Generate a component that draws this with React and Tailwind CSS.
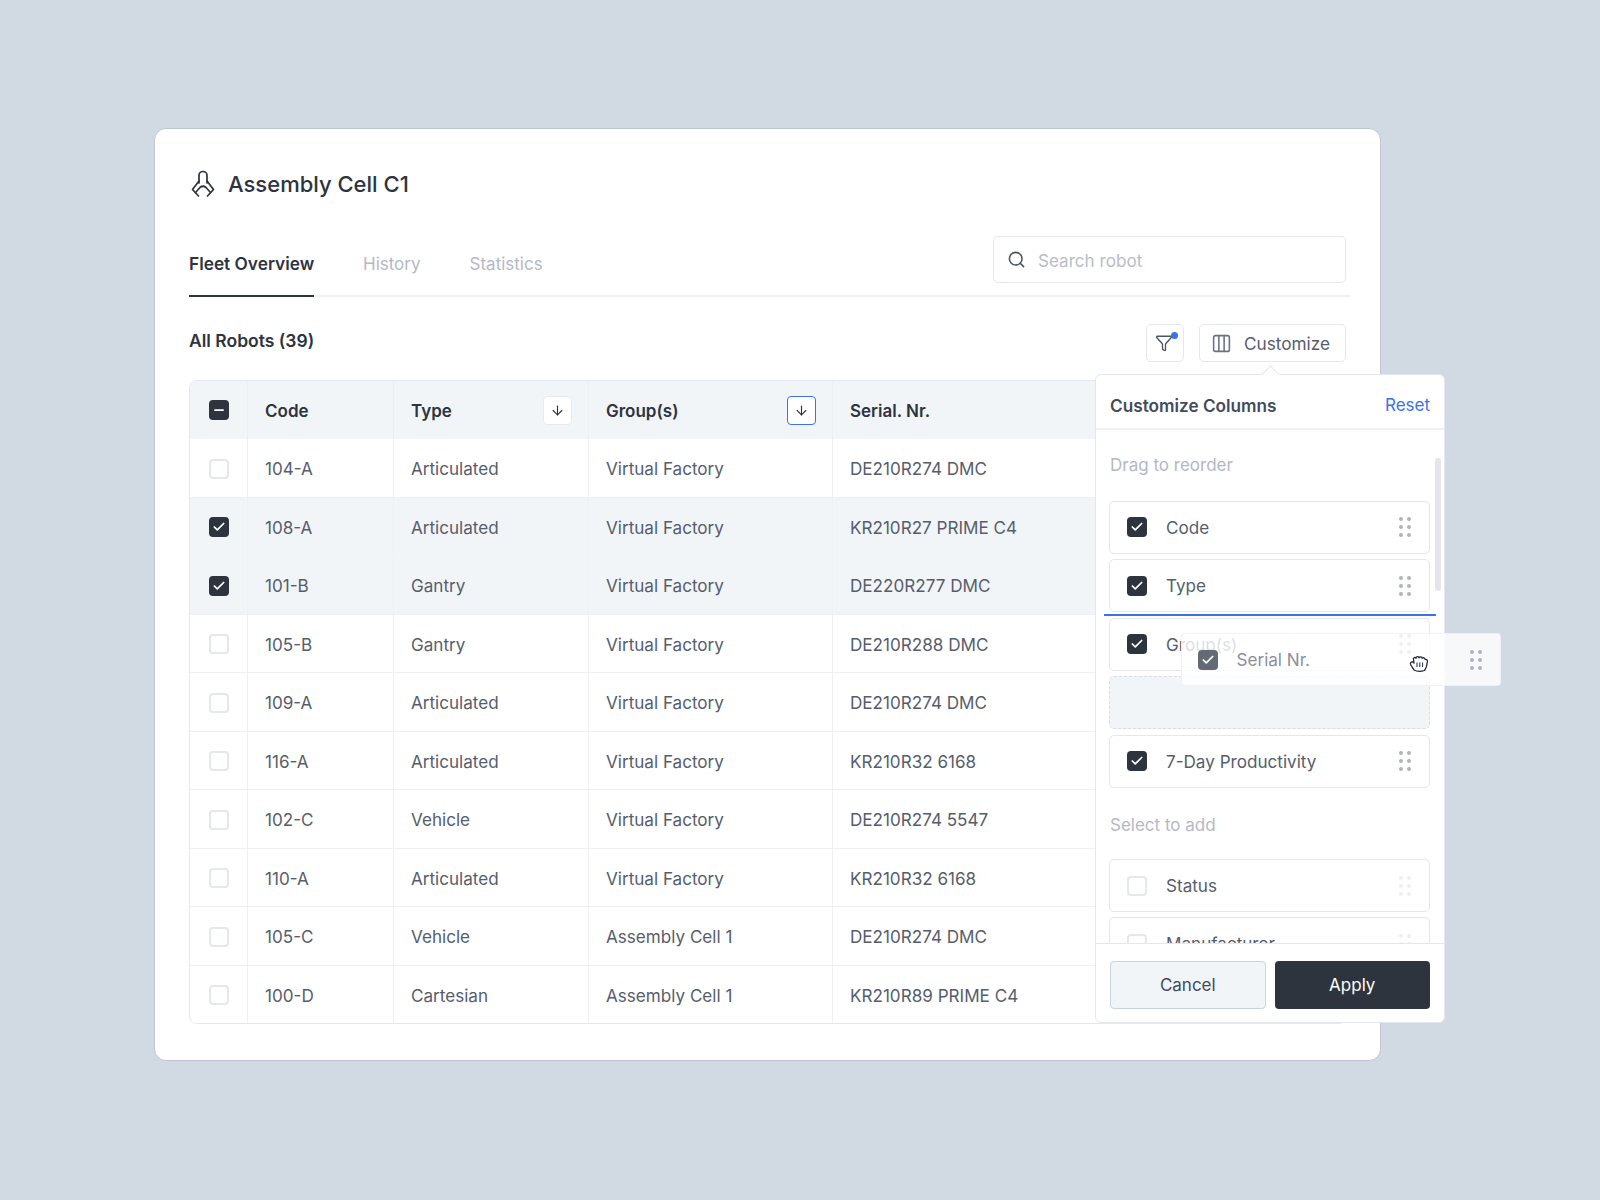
import React from "react";
import { ArrowDown, Check, Columns3, Funnel, Minus, Search } from "lucide-react";

const robots = [
  { code: "104-A", type: "Articulated", group: "Virtual Factory", serial: "DE210R274 DMC" },
  { code: "108-A", type: "Articulated", group: "Virtual Factory", serial: "KR210R27 PRIME C4", on: true },
  { code: "101-B", type: "Gantry", group: "Virtual Factory", serial: "DE220R277 DMC", on: true },
  { code: "105-B", type: "Gantry", group: "Virtual Factory", serial: "DE210R288 DMC" },
  { code: "109-A", type: "Articulated", group: "Virtual Factory", serial: "DE210R274 DMC" },
  { code: "116-A", type: "Articulated", group: "Virtual Factory", serial: "KR210R32 6168" },
  { code: "102-C", type: "Vehicle", group: "Virtual Factory", serial: "DE210R274 5547" },
  { code: "110-A", type: "Articulated", group: "Virtual Factory", serial: "KR210R32 6168" },
  { code: "105-C", type: "Vehicle", group: "Assembly Cell 1", serial: "DE210R274 DMC" },
  { code: "100-D", type: "Cartesian", group: "Assembly Cell 1", serial: "KR210R89 PRIME C4" },
];

const rowGrid = "grid grid-cols-[58px_146px_195px_244px_1fr]";

const Box = ({ on, mixed, faded }) => {
  if (on || mixed) {
    return (
      <span className={`flex h-5 w-5 shrink-0 items-center justify-center rounded-[4px] ${faded ? "bg-[#646a74]" : "bg-[#2d343e]"}`}>
        {mixed ? <Minus size={14} strokeWidth={3} color="#fff" /> : <Check size={14} strokeWidth={3} color="#fff" />}
      </span>
    );
  }
  return <span className="block h-5 w-5 shrink-0 rounded-[4px] border-2 border-[#e5e7ee] bg-white" />;
};

const Dots = ({ light }) => (
  <svg width="14" height="22" viewBox="0 0 14 22" className={light ? "fill-[#eceef2]" : "fill-[#aeb3c0]"}>
    {[3, 11, 19].map((y) => (
      <g key={y}>
        <circle cx="3" cy={y} r="2" />
        <circle cx="11" cy={y} r="2" />
      </g>
    ))}
  </svg>
);

const SortBtn = ({ active }) => (
  <span className={`flex h-[29px] w-[29px] items-center justify-center rounded-[4px] bg-white border ${active ? "border-[#3b71ee] border-[1.5px]" : "border-[#e8eaf0]"}`}>
    <ArrowDown size={15} strokeWidth={1.8} color="#2d343e" />
  </span>
);

const HeadCell = ({ label, active, border }) => (
  <div className={`flex items-center justify-between pl-[17px] pr-[16px] ${border ? "border-r border-[#eceff4]" : ""}`}>
    <span className="pt-[4px] text-[17px] font-semibold text-[#2d343e]">{label}</span>
    <SortBtn active={active} />
  </div>
);

const ColItem = ({ label, on, light }) => (
  <div className="flex h-[53px] shrink-0 items-center rounded-[5px] border border-[#e5e7ee] bg-white pl-[17px] pr-[17px]">
    <Box on={on} />
    <span className="ml-[19px] flex-1 pt-[1px] text-[17.1px] text-[#565d6b]">{label}</span>
    <Dots light={light} />
  </div>
);

const RobotIcon = () => (
  <svg width="26" height="28" viewBox="0 0 26 28" fill="none" stroke="#2d343e" strokeWidth="1.7" strokeLinejoin="round" strokeLinecap="round" className="ml-[1px]">
    <path d="M9 13V5.500a4 4 0 0 1 8 0V13" />
    <path d="M9 11 2.500 19.500 8.500 26" />
    <path d="M17 11 23.500 19.500 17.500 26" />
    <path d="M5.500 22.500 10 17.500Q13 15 16 17.500L20.500 22.500" />
  </svg>
);

const GrabHand = () => (
  <svg width="20" height="20" viewBox="0 0 20 20" stroke="#1f2937" strokeWidth="1.3" fill="#fff" strokeLinejoin="round">
    <path d="M5 17C4 15 2.500 13.500 1.600 11.500 1 10 2 8.600 3.600 9L5 10 4.400 6C4.200 4.400 6.300 3.900 7 5.300 7 3.200 9.700 3 10.100 4.800 10.500 3.400 13 3.400 13.200 5.300 13.800 4.300 16 4.600 16.100 6.400 17.400 6 18.600 7 18.400 8.600L17.600 13C17.300 14.800 16.200 16 15.500 17.500 12 18.600 8 18.600 5 17Z" />
    <path d="M8 9.500v4.500M10.800 9.500v4.500M13.600 9.500v4.500" strokeWidth="1" />
  </svg>
);

export default function App() {
  return (
    <div className="min-h-screen bg-[#d1d9e3] pt-[128px] pl-[154px] font-['Inter',sans-serif]">
      <div className="relative h-[933px] w-[1227px] rounded-[12px] border border-[#bcc8d6] bg-white px-[34px] pt-[41px]">
        {/* title */}
        <div className="flex h-[28px] items-center">
          <RobotIcon />
          <h1 className="ml-[12px] text-[22px] font-[450] text-[#2d343e]">Assembly Cell C1</h1>
        </div>

        {/* tabs */}
        <div className="mt-[38px] flex h-[61px] w-[1161px] items-end border-b-2 border-[#f0f1f5]">
          <div className="-mb-[2px] w-[125px] border-b-2 border-[#2d343e] pb-[18px] text-[17.3px] font-semibold whitespace-nowrap text-[#2d343e]">Fleet Overview</div>
          <div className="ml-[49px] pb-[18px] text-[17px] text-[#b4b8c6]">History</div>
          <div className="ml-[49px] pb-[18px] text-[17px] text-[#b4b8c6]">Statistics</div>
          <div className="mb-[12px] ml-auto mr-[4px] flex h-[47px] w-[353px] items-center rounded-[5px] border border-[#e5e7ee] pl-[13px]">
            <Search size={19} strokeWidth={2} color="#4b5563" />
            <span className="ml-[12px] pt-[2px] text-[17.1px] text-[#b9bcc8]">Search robot</span>
          </div>
        </div>

        {/* toolbar */}
        <div className="mt-[27px] flex h-[38px] w-[1157px] items-start">
          <span className="mt-[4px] text-[17.5px] font-semibold text-[#2d343e]">All Robots (39)</span>
          <div className="relative ml-auto flex h-[38px] w-[38px] items-center justify-center rounded-[5px] border border-[#e5e7ee]">
            <span className="-ml-[3px]">
              <Funnel size={18} strokeWidth={1.8} color="#4b5563" />
            </span>
            <span className="absolute top-[7px] right-[5px] h-[7px] w-[7px] rounded-full bg-[#3b71ee]" />
          </div>
          <div className="ml-[15px] flex h-[38px] w-[147px] items-center rounded-[5px] border border-[#e5e7ee] pl-[11px]">
            <Columns3 size={21} strokeWidth={1.8} color="#6b7280" />
            <span className="ml-[12px] pt-[1px] text-[17.2px] text-[#565d6b]">Customize</span>
          </div>
        </div>

        {/* table */}
        <div className="mt-[18px] w-[1158px] overflow-hidden rounded-[8px] border border-[#e5e7ee]">
          <div className={`${rowGrid} h-[58px] bg-[#f2f5f8]`}>
            <div className="flex items-center justify-center border-r border-[#eceff4]">
              <Box mixed />
            </div>
            <div className="flex items-center border-r border-[#eceff4] pl-[17px]">
              <span className="pt-[4px] text-[17px] font-semibold text-[#2d343e]">Code</span>
            </div>
            <HeadCell label="Type" border />
            <HeadCell label="Group(s)" active border />
            <HeadCell label="Serial. Nr." />
          </div>
          {robots.map((r, i) => {
            const sep = r.on ? "border-[#eef1f5]" : "border-[#eef0f4]";
            const last = i === robots.length - 1;
            return (
              <div key={i} className={`${rowGrid} text-[17.1px] text-[#565d6b] ${last ? "h-[57.5px]" : "h-[58.5px] border-b"} ${r.on ? "bg-[#f2f5f8]" : "bg-white"} ${i === 1 ? "border-[#f2f5f8]" : "border-[#eef0f4]"}`}>
                <div className={`flex items-center justify-center border-r pt-[2px] ${sep}`}>
                  <Box on={r.on} />
                </div>
                <div className={`flex items-center border-r pl-[17px] pt-[3px] ${sep}`}>{r.code}</div>
                <div className={`flex items-center border-r pl-[17px] pt-[3px] ${sep}`}>{r.type}</div>
                <div className={`flex items-center border-r pl-[17px] pt-[3px] ${sep}`}>{r.group}</div>
                <div className="flex items-center pl-[17px] pt-[3px]">{r.serial}</div>
              </div>
            );
          })}
        </div>

        {/* customize popover */}
        <div className="absolute top-[245px] left-[940px] flex h-[649px] w-[350px] flex-col rounded-[6px] border border-[#e5e7ee] bg-white">
          <span className="absolute -top-[7px] left-[168px] h-[13px] w-[13px] rotate-45 border-t border-l border-[#e5e7ee] bg-white" />
          <div className="flex h-[55px] shrink-0 items-center justify-between border-b-2 border-[#f0f1f5] pr-[14px] pl-[14px] pt-[8px]">
            <span className="text-[17.2px] font-semibold text-[#414b5c]">Customize Columns</span>
            <span className="text-[17px] text-[#3b71ee]">Reset</span>
          </div>
          <div className="relative flex-1 overflow-hidden pr-[14px] pl-[13px]">
            <span className="absolute top-[28px] right-[3px] h-[133px] w-[6px] rounded-full bg-[#e3e5eb]" />
            <div className="mt-[23px] h-[24px] pl-[1px] text-[17px] text-[#b4b8c6]">Drag to reorder</div>
            <div className="mt-[23.5px] flex flex-col gap-[5.5px]">
              <ColItem label="Code" on />
              <ColItem label="Type" on />
              <ColItem label="Group(s)" on />
              <div className="h-[53px] shrink-0 rounded-[5px] border border-dashed border-[#d8dce4] bg-[#f2f5f8]" />
              <ColItem label="7-Day Productivity" on />
            </div>
            <div className="mt-[25.5px] h-[24px] pl-[1px] text-[17px] text-[#b4b8c6]">Select to add</div>
            <div className="mt-[22px] flex flex-col gap-[5px]">
              <ColItem label="Status" light />
              <ColItem label="Manufacturer" light />
            </div>
          </div>
          <div className="flex h-[79px] shrink-0 gap-[9px] border-t border-[#e5e7ee] pl-[14px] pt-[17px]">
            <button className="h-[48px] w-[155.5px] rounded-[4px] border border-[#c9d2de] bg-[#f2f5f8] pt-[1px] text-[17px] text-[#414b5c]">Cancel</button>
            <button className="h-[48px] w-[155.5px] rounded-[4px] bg-[#2d343e] pt-[1px] text-[17px] text-[#fff]">Apply</button>
          </div>
        </div>

        {/* drop line */}
        <span className="absolute top-[484.5px] left-[949px] h-[2px] w-[332px] bg-[#3b71ee]" />

        {/* dragged row */}
        <div className="absolute top-[504px] left-[1025.5px] flex h-[53px] w-[320px] items-center rounded-[4px] border border-[#e9ecf2]/70 bg-white/80 pl-[16px] pr-[17px]">
          <Box on faded />
          <span className="ml-[19px] flex-1 pt-[1px] text-[17.1px] text-[#8b909c]">Serial Nr.</span>
          <Dots />
        </div>
        <span className="absolute top-[524px] left-[1254px]">
          <GrabHand />
        </span>
      </div>
    </div>
  );
}
